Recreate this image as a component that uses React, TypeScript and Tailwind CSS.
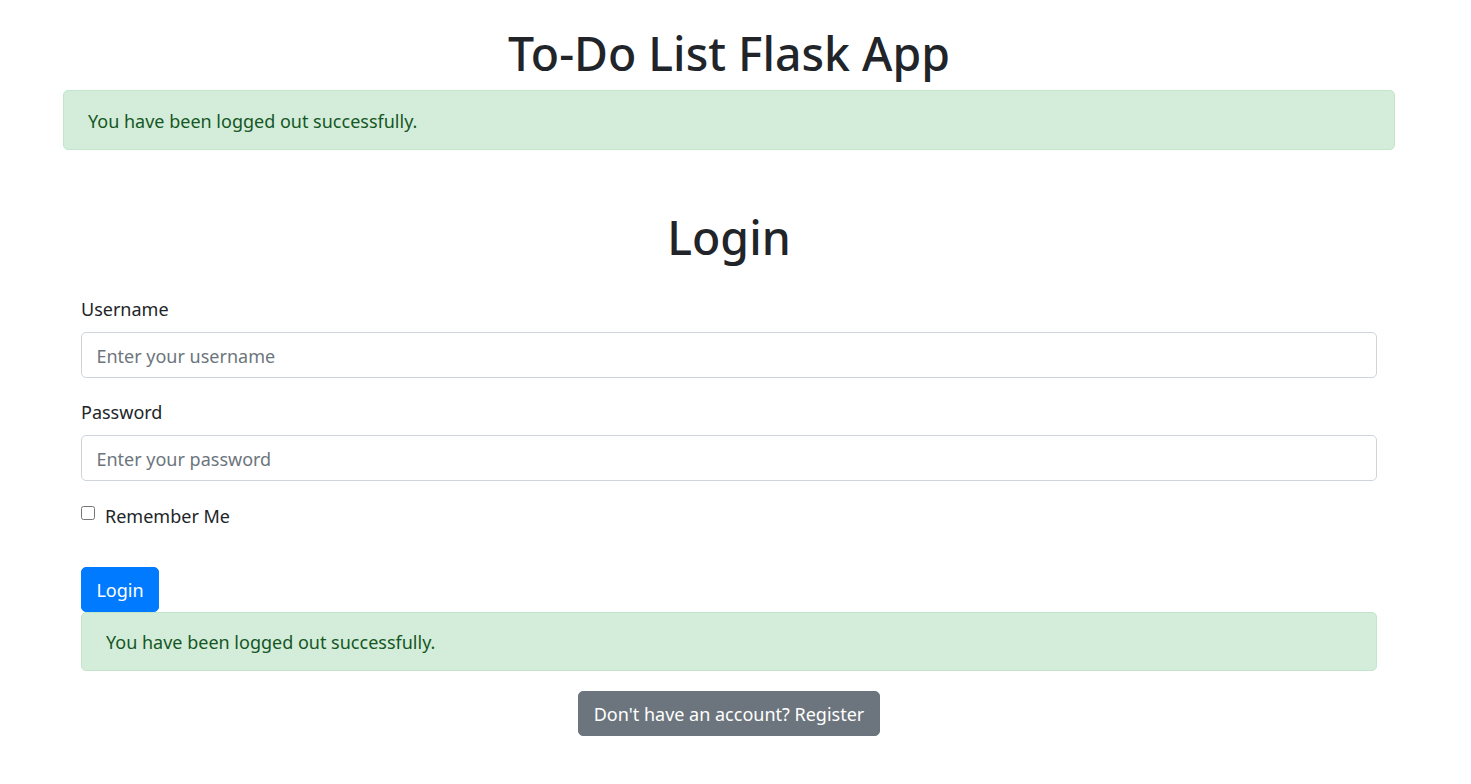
import React from 'react';

const FONT = "font-['Noto_Sans','Open_Sans',sans-serif]";

function Alert({ children }: { children: React.ReactNode }) {
  return (
    <div className="rounded-[5px] border-[1.2px] border-[#c3e6cb] bg-[#d4edda] px-6 pt-[15.4px] pb-[13.4px] text-[#155724]">
      {children}
    </div>
  );
}

function Field({ label, placeholder, type }: { label: string; placeholder: string; type: string }) {
  return (
    <div className="mb-[19.2px]">
      <label className="mb-[9.6px] block pt-[2px] leading-[26.8px]">{label}</label>
      <input
        type={type}
        placeholder={placeholder}
        className="block h-[45.6px] w-full rounded-[5px] border-[1.2px] border-[#ced4da] bg-white px-[14.4px] pt-[2px] text-[#495057] outline-none placeholder:text-[#6c757d]"
      />
    </div>
  );
}

export default function App() {
  return (
    <div className={`min-h-screen bg-white pt-[23px] text-[18px] leading-[28.8px] text-[#212529] ${FONT}`}>
      <div className="ml-[63px] w-[1332px]">
        <h1 className="mb-[9.6px] pt-[4px] text-center text-[46.4px] font-medium leading-[53.6px]">To-Do List Flask App</h1>
        <Alert>You have been logged out successfully.</Alert>

        <div className="mx-[18px] mt-[57.6px]">
          <h1 className="mb-[28.8px] pt-[4px] text-center text-[46.4px] font-medium leading-[53.6px]">Login</h1>
          <form onSubmit={(e) => e.preventDefault()}>
            <Field label="Username" placeholder="Enter your username" type="text" />
            <Field label="Password" placeholder="Enter your password" type="password" />
            <div className="relative mb-[35.8px] pl-6 pt-[2px]">
              <input type="checkbox" id="remember" className="absolute left-0 top-[6px] m-0 h-[14px] w-[14px]" />
              <label htmlFor="remember">Remember Me</label>
            </div>
            <button className="block rounded-[5px] border-[1.2px] border-[#007bff] bg-[#007bff] px-[14.4px] pt-[8.2px] pb-[6.2px] text-white">
              Login
            </button>
          </form>
          <div className="mb-[19.2px]">
            <Alert>You have been logged out successfully.</Alert>
          </div>
          <div className="flex justify-center">
            <a className="rounded-[5px] border-[1.2px] border-[#6c757d] bg-[#6c757d] px-[14.4px] pt-[8.2px] pb-[6.2px] text-white">
              Don't have an account? Register
            </a>
          </div>
        </div>
      </div>
    </div>
  );
}
